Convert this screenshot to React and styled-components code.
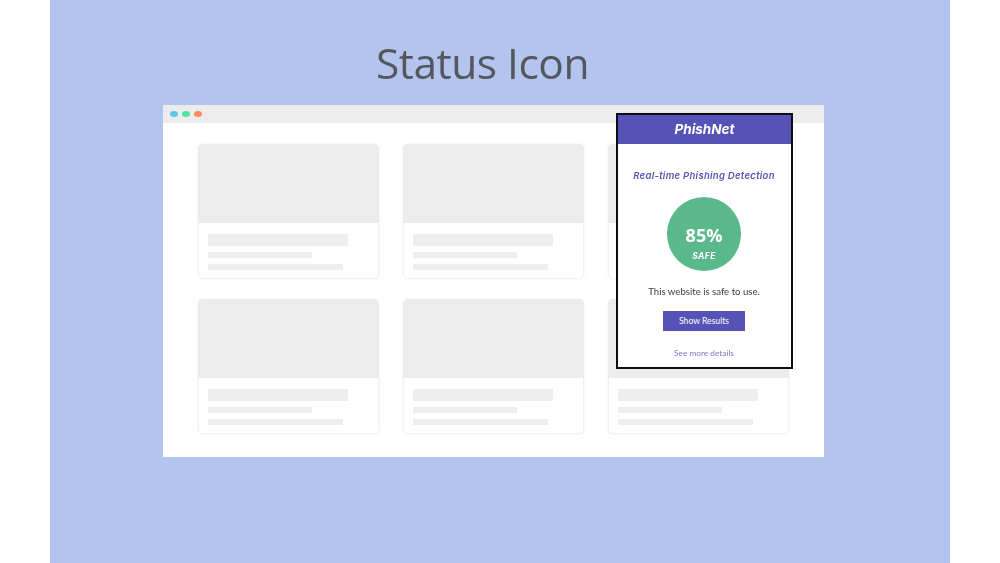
import styled, { createGlobalStyle } from 'styled-components';

const GlobalStyle = createGlobalStyle`
    html, body {
        margin: 0;
        padding: 0;
        background: #ffffff;
        overflow: hidden;
    }
`;

const Slide = styled.main`
    box-sizing: border-box;
    width: 900px;
    height: 563px;
    margin-left: 50px;
    padding: 36px 0 0 113px;
    background-color: #b3c5ee;
`;

const Title = styled.h1`
    width: 639px;
    height: 69px;
    margin: 0;
    color: #55575f;
    font-family: "Open Sans", sans-serif;
    font-size: 42.5px;
    font-weight: 400;
    line-height: 54px;
    text-align: center;
    letter-spacing: -0.5px;
    filter: blur(0.4px);
`;

const Browser = styled.section`
    position: relative;
    width: 661px;
    height: 352px;
    background-color: #ffffff;
`;

const TitleBar = styled.header`
    box-sizing: border-box;
    display: flex;
    align-items: center;
    gap: 4px;
    height: 18px;
    padding-left: 7px;
    background-color: #ececec;
`;

const Dot = styled.span`
    width: 8px;
    height: 6px;
    border-radius: 50%;
    background-color: ${props => props.$color};
    filter: blur(0.3px);
`;

const CardGrid = styled.div`
    display: grid;
    grid-template-columns: repeat(3, 181px);
    column-gap: 24px;
    row-gap: 20px;
    padding: 21px 0 0 35px;
`;

const Card = styled.article`
    height: 135px;
    border-radius: 5px;
    box-shadow: 0 0 2px #e8e8e8;
    overflow: hidden;
    background-color: #ffffff;
`;

const CardImage = styled.div`
    height: 79px;
    background-color: #ececec;
`;

const CardBody = styled.div`
    box-sizing: border-box;
    display: flex;
    flex-direction: column;
    align-items: flex-start;
    height: 56px;
    padding: 11px 0 0 9px;
    border: 1px solid #f1f1f1;
    border-top: none;
    border-radius: 0 0 5px 5px;
`;

const Line = styled.div`
    width: ${props => props.$width}px;
    height: ${props => props.$height}px;
    margin-bottom: 6px;
    background-color: #eeeeee;
`;

const Popup = styled.aside`
    position: absolute;
    top: 8px;
    left: 453px;
    box-sizing: border-box;
    width: 177px;
    height: 256px;
    border: 2px solid #0c0c12;
    background-color: #ffffff;
    font-family: Lato, "Open Sans", sans-serif;
`;

const PopupHeader = styled.header`
    height: 29px;
    color: #ffffff;
    background-color: #5553b5;
    font-family: Inter, sans-serif;
    font-size: 13.5px;
    font-style: italic;
    font-weight: 700;
    line-height: 29px;
    text-align: center;
    filter: blur(0.3px);
`;

const PopupBody = styled.div`
    display: flex;
    flex-direction: column;
    align-items: center;
    padding-right: 1px;
`;

const Tagline = styled.h2`
    margin: 26px 0 0;
    color: #5553b5;
    font-family: Inter, sans-serif;
    font-size: 9.5px;
    font-style: italic;
    font-weight: 600;
    line-height: 12px;
    letter-spacing: 0.3px;
    white-space: nowrap;
    filter: blur(0.3px);
`;

const Gauge = styled.div`
    display: flex;
    flex-direction: column;
    align-items: center;
    width: 74px;
    height: 74px;
    margin-top: 15px;
    border-radius: 50%;
    color: #ffffff;
    background-color: #59b98b;
`;

const Percent = styled.strong`
    margin-top: 26px;
    font-family: "Open Sans", sans-serif;
    font-size: 18px;
    font-weight: 700;
    line-height: 24px;
    filter: blur(0.3px);
`;

const GaugeLabel = styled.span`
    margin-top: 4px;
    font-family: Inter, sans-serif;
    font-size: 8.5px;
    font-style: italic;
    font-weight: 700;
    line-height: 10px;
    letter-spacing: 0.4px;
    filter: blur(0.3px);
`;

const Message = styled.p`
    margin: 15px 0 0;
    color: #3c3c44;
    font-size: 9.6px;
    line-height: 12px;
    white-space: nowrap;
    filter: blur(0.3px);
`;

const ResultsButton = styled.button`
    width: 82px;
    height: 20px;
    margin-top: 13px;
    padding: 0;
    border: none;
    color: #ffffff;
    background-color: #5553b5;
    font-family: Lato, sans-serif;
    font-size: 8.6px;
    font-weight: 400;
`;

const DetailsLink = styled.a`
    margin-top: 17px;
    color: #7b79c6;
    font-size: 8.3px;
    line-height: 11px;
    filter: blur(0.3px);
`;

const cards = [1, 2, 3, 4, 5, 6];

export default function App () {
    return (
        <>
            <GlobalStyle />
            <Slide>
                <Title>Status Icon</Title>
                <Browser>
                    <TitleBar>
                        <Dot $color="#5cc8ee" />
                        <Dot $color="#4de8a0" />
                        <Dot $color="#ff8a65" />
                    </TitleBar>
                    <CardGrid>
                        {cards.map(card => (
                            <Card key={card}>
                                <CardImage />
                                <CardBody>
                                    <Line $width={140} $height={12} />
                                    <Line $width={104} $height={6} />
                                    <Line $width={135} $height={6} />
                                </CardBody>
                            </Card>
                        ))}
                    </CardGrid>
                    <Popup>
                        <PopupHeader>PhishNet</PopupHeader>
                        <PopupBody>
                            <Tagline>Real-time Phishing Detection</Tagline>
                            <Gauge>
                                <Percent>85%</Percent>
                                <GaugeLabel>SAFE</GaugeLabel>
                            </Gauge>
                            <Message>This website is safe to use.</Message>
                            <ResultsButton>Show Results</ResultsButton>
                            <DetailsLink>See more details</DetailsLink>
                        </PopupBody>
                    </Popup>
                </Browser>
            </Slide>
        </>
    )
};
